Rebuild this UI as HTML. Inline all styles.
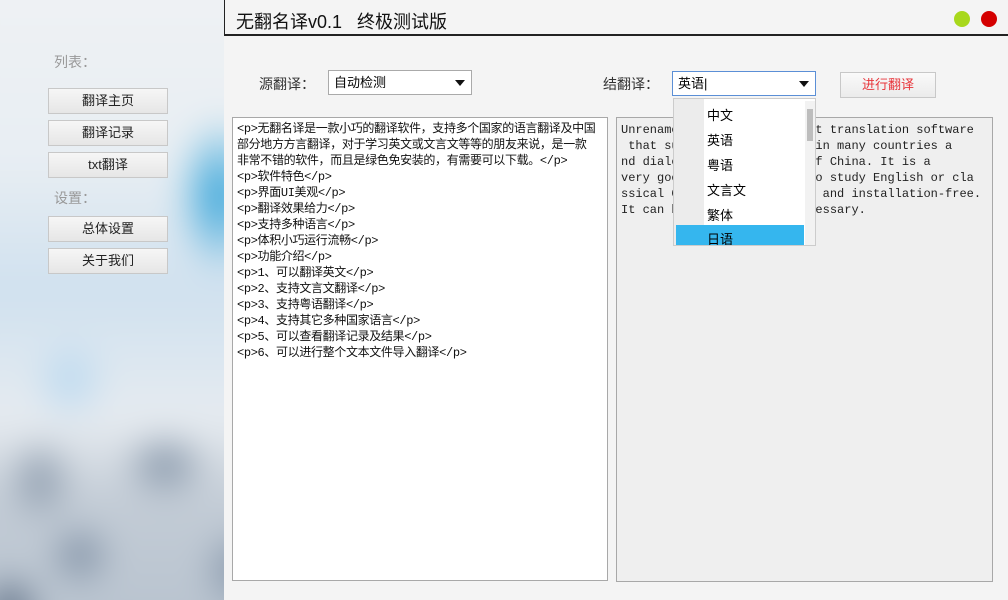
<!DOCTYPE html>
<html><head><meta charset="utf-8"><style>
*{margin:0;padding:0;box-sizing:border-box}
html,body{width:1008px;height:600px;overflow:hidden}
body{background:#f4f4f4;position:relative;font-family:"Liberation Sans","Noto Sans CJK SC",sans-serif;}
.abs{position:absolute}
#side{left:0;top:0;width:224px;height:600px;overflow:hidden;background:#dce6ef}
#side .bg{position:absolute;left:-40px;top:-40px;width:304px;height:680px;filter:blur(16px);
background:
radial-gradient(ellipse 45px 80px at 260px 235px,#2aa0d8,transparent),
radial-gradient(ellipse 40px 45px at 110px 420px,#b8d8f0,transparent),
radial-gradient(ellipse 35px 45px at 80px 520px,#8796a8,transparent),
radial-gradient(ellipse 45px 35px at 205px 505px,#7d8ea2,transparent),
radial-gradient(ellipse 35px 35px at 120px 595px,#7a8ba0,transparent),
radial-gradient(ellipse 35px 40px at 50px 650px,#52637a,transparent),
radial-gradient(ellipse 35px 45px at 275px 610px,#8192a6,transparent),
linear-gradient(180deg,#f0f2f4 0px,#e8eef3 200px,#d0e1ef 330px,#dce7f0 400px,#e6ebf0 460px,#c3ccd6 540px,#b7c2ce 680px);}
.lbl{color:#999;font-size:14px}
.btn{position:absolute;left:48px;width:120px;height:26px;border:1px solid #c8c8c8;background:linear-gradient(#f6f6f6,#e6e6e6);font-size:13px;color:#222;text-align:center;line-height:24px}
.ta{border:1px solid #a8a8a8;font-size:12px;line-height:16px}
.sel{border:1px solid #aaa;background:#fff;height:25px;font-size:13px;line-height:23px;padding-left:5px}
.arr{position:absolute;right:6px;top:9px;width:0;height:0;border-left:5px solid transparent;border-right:5px solid transparent;border-top:6px solid #111}
.mono{font-family:"Liberation Mono",monospace;font-size:12px;line-height:16px;letter-spacing:0}
.it{position:absolute;left:33px;font-size:13px}
</style></head><body>
<div id="side" class="abs"><div class="bg"></div></div>
<div class="abs lbl" style="left:54px;top:52px">列表：</div>
<div class="btn" style="top:88px">翻译主页</div>
<div class="btn" style="top:120px">翻译记录</div>
<div class="btn" style="top:152px">txt翻译</div>
<div class="abs lbl" style="left:54px;top:188px">设置：</div>
<div class="btn" style="top:216px">总体设置</div>
<div class="btn" style="top:248px">关于我们</div>

<div class="abs" style="left:224px;top:0;width:784px;height:36px;border-left:1px solid #222;border-bottom:2px solid #222"></div>
<div class="abs" style="left:236px;top:8px;font-size:18px;color:#111">无翻名译v0.1&nbsp;&nbsp; 终极测试版</div>
<div class="abs" style="left:954px;top:11px;width:16px;height:16px;border-radius:50%;background:#a8d81c"></div>
<div class="abs" style="left:981px;top:11px;width:16px;height:16px;border-radius:50%;background:#d40000"></div>

<div class="abs" style="left:259px;top:74px;font-size:14px;color:#333">源翻译：</div>
<div class="abs sel" style="left:328px;top:70px;width:144px">自动检测<div class="arr"></div></div>
<div class="abs" style="left:603px;top:74px;font-size:14px;color:#333">结翻译：</div>
<div class="abs sel" style="left:672px;top:71px;width:144px;border-color:#5b8fd6">英语|<div class="arr"></div></div>
<div class="abs" style="left:840px;top:72px;width:96px;height:26px;border:1px solid #c8c8c8;background:linear-gradient(#fafafa,#ebebeb);color:#e8343a;font-size:13px;text-align:center;line-height:24px">进行翻译</div>

<div class="abs ta" style="left:232px;top:117px;width:376px;height:464px;background:#fff;padding:3px 4px;font-family:'Liberation Mono','Noto Sans CJK SC',monospace;color:#111;letter-spacing:-0.35px;white-space:nowrap;overflow:hidden">
&lt;p&gt;无翻名译是一款小巧的翻译软件，支持多个国家的语言翻译及中国<br>部分地方方言翻译，对于学习英文或文言文等等的朋友来说，是一款<br>非常不错的软件，而且是绿色免安装的，有需要可以下载。&lt;/p&gt;<br>&lt;p&gt;软件特色&lt;/p&gt;<br>&lt;p&gt;界面UI美观&lt;/p&gt;<br>&lt;p&gt;翻译效果给力&lt;/p&gt;<br>&lt;p&gt;支持多种语言&lt;/p&gt;<br>&lt;p&gt;体积小巧运行流畅&lt;/p&gt;<br>&lt;p&gt;功能介绍&lt;/p&gt;<br>&lt;p&gt;1、可以翻译英文&lt;/p&gt;<br>&lt;p&gt;2、支持文言文翻译&lt;/p&gt;<br>&lt;p&gt;3、支持粤语翻译&lt;/p&gt;<br>&lt;p&gt;4、支持其它多种国家语言&lt;/p&gt;<br>&lt;p&gt;5、可以查看翻译记录及结果&lt;/p&gt;<br>&lt;p&gt;6、可以进行整个文本文件导入翻译&lt;/p&gt;
</div>
<div class="abs ta mono" style="left:616px;top:117px;width:377px;height:465px;background:#efefef;padding:4px 4px;color:#222;white-space:pre;overflow:hidden">Unrenamed is a small compact translation software
 that supports translation in many countries a
nd dialects in some parts of China. It is a
very good tool for those who study English or cla
ssical Chinese. It is green and installation-free.
It can be downloaded if necessary.</div>

<div class="abs" style="left:673px;top:98px;width:143px;height:148px;background:#fff;border:1px solid #ccc;overflow:hidden">
<div class="abs" style="left:0;top:0;width:30px;height:148px;background:#ececec"></div>
<div class="it" style="top:6px">中文</div>
<div class="it" style="top:31px">英语</div>
<div class="it" style="top:56px">粤语</div>
<div class="it" style="top:81px">文言文</div>
<div class="it" style="top:106px">繁体</div>
<div class="abs" style="left:2px;top:126px;width:128px;height:20px;background:#35b6ee"></div>
<div class="it" style="top:130px">日语</div>
<div class="abs" style="left:131px;top:2px;width:10px;height:144px;background:#f2f2f2"></div>
<div class="abs" style="left:133px;top:10px;width:6px;height:32px;background:#bdbdbd"></div>
</div>
</body></html>
